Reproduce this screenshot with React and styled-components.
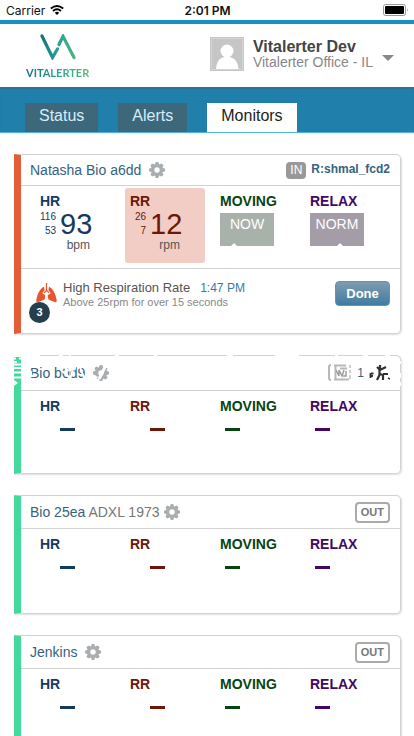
import styled, { createGlobalStyle } from "styled-components";

//#region Data
const tabs = ["Status", "Alerts", "Monitors"];

const monitors = [
	{
		name: "Natasha Bio a6dd",
		presence: "IN",
		room: "R:shmal_fcd2",
		headerHeight: 32,
		gearGap: 8,
		hr: { value: 93, high: 116, low: 53 },
		rr: { value: 12, high: 26, low: 7 },
		moving: "NOW",
		relax: "NORM",
		alert: {
			title: "High Respiration Rate",
			time: "1:47 PM",
			details: "Above 25rpm for over 15 seconds",
			count: 3,
		},
	},
	{ name: "Bio b0d9", worn: true, headerHeight: 36, gearGap: 8 },
	{ name: "Bio 25ea", device: "ADXL 1973", presence: "OUT", headerHeight: 34, gearGap: 4 },
	{ name: "Jenkins", presence: "OUT", headerHeight: 34, gearGap: 8 },
];

const colors = {
	hr: "#163a5f",
	rr: "#6d1709",
	moving: "#08440f",
	relax: "#430663",
};
//#endregion

//#region Icons
const WifiIcon = () => (
	<svg width="14" height="10" viewBox="0 0 14 10" fill="none" stroke="#000" strokeWidth="1.9">
		<path d="M0.8 3.6Q7 -1.6 13.2 3.6M3 6Q7 2.6 11 6" />
		<path d="M7 10 4.8 7.7Q7 6 9.2 7.7Z" fill="#000" stroke="none" />
	</svg>
);

const BatteryIcon = () => (
	<svg width="26" height="12" viewBox="0 0 26 12">
		<rect x="0.5" y="0.5" width="22" height="11" rx="2" fill="#fff" stroke="#999" />
		<rect x="2" y="2" width="19" height="8" rx="1" fill="#000" />
		<path d="M24 4Q25.5 6 24 8Z" fill="#999" />
	</svg>
);

const LogoMark = () => (
	<svg width="36" height="26" viewBox="0 0 36 26" fill="none" strokeWidth="3.2" strokeLinecap="round">
		<defs>
			<linearGradient id="mark" x1="0" x2="36" y1="0" y2="0" gradientUnits="userSpaceOnUse">
				<stop offset="0" stopColor="#126d80" />
				<stop offset="0.5" stopColor="#2aa295" />
				<stop offset="1" stopColor="#53b578" />
			</linearGradient>
		</defs>
		<path d="M2 2 12.5 23.5 17.5 15" stroke="url(#mark)" />
		<path d="M19 10.5 23 2.3 34 23.5" stroke="url(#mark)" />
	</svg>
);

const GearIcon = () => (
	<svg width="16" height="16" viewBox="-8 -8 16 16" fill="#aaaeb1">
		{[0, 45, 90, 135].map((angle) => (
			<path key={angle} d="M-2 -6 -1.3 -8H1.3L2 -6V6L1.3 8H-1.3L-2 6Z" transform={`rotate(${angle})`} />
		))}
		<circle r="6" />
		<circle r="2.7" fill="#fff" />
	</svg>
);

const LungsIcon = () => (
	<svg width="21" height="20" viewBox="0 0 21 20" fill="#e9532d">
		<path d="M9.9 0H11.1V7L13.5 9.5 12.7 10.3 10.5 8.3 8.3 10.3 7.5 9.5 9.9 7Z" />
		<path d="M8 3.7C4.5 4.7 1 11.5.3 17.5.1 19.6 1.8 19.5 3.7 18.5L8 16.8Q9.3 16 9.2 11.5L8 11.8 6.3 10 8.6 7.2Z" />
		<path d="M13 3.7C16.5 4.7 20 11.5 20.7 17.5 20.9 19.6 19.2 19.5 17.3 18.5L13 16.8Q11.7 16 11.8 11.5L13 11.8 14.7 10 12.4 7.2Z" />
	</svg>
);

const AvatarIcon = () => (
	<svg width="34" height="34" viewBox="0 0 34 34">
		<rect width="34" height="34" fill="#c6c6c6" />
		<path d="M1.5 1.5H32.5V32.5H1.5Z" fill="none" stroke="#d5d5d5" />
		<circle cx="17" cy="14" r="6.5" fill="#fff" />
		<path d="M6 32C6.5 25 9 21.5 14 20H20C25 21.5 28 25 28.5 32Z" fill="#fff" />
	</svg>
);

// Broken up badge and figure at the end of a worn header
const WornBadge = () => (
	<svg width="24" height="18" viewBox="0 0 24 18" fill="none" stroke="#b8b8b8">
		<path d="M3 1Q1 1 1 3V14Q1 16 3 16" strokeWidth="2" />
		<path d="M6 1.5H18M7.5 1V15M6 15.5H21M12 4.5H19" strokeWidth="2" />
		<path d="M8 6 11 12V6L14 12 16 6M15 12H18V7" stroke="#999" strokeWidth="1.4" />
		<path d="M22 1V4M22 6V9M22 11V15" strokeWidth="1.4" />
	</svg>
);

const WornFigure = () => (
	<svg width="21" height="18" viewBox="0 0 21 18" fill="none" stroke="#303030">
		<path d="M1.5 9V14M2 9.5H4.5M2 12H4" strokeWidth="1.8" />
		<path d="M8 3 11 6 17 3M11 1V5M10.5 6V11L8 16M11 10 14 11V16M14 10 19 10" strokeWidth="2.2" />
		<path d="M19 14 21 15" strokeWidth="1.5" />
	</svg>
);

const Scratches = () => (
	<ScratchLayer viewBox="0 0 387 34" fill="none" stroke="#fff" aria-hidden="true">
		<path d="M0 1H26M0 3.5H2M5 3.5H7M0 7H3M0 9.5H7M0 13H7M0 17.5H7M0 22.5H7" strokeWidth="2" />
		<path d="M0 25 4 28 0 31Z" fill="#fff" stroke="none" />
		<path d="M45 0H49M55 0H57M101 0H105M140 0H143M213 0H219M261 0H285M321 0H324M349 0H354M371 0H376" strokeWidth="4" />
		<path d="M17 9V13M17 16V20M16 21H20M47 15 55 22M50 12 55 16M60 9 57 22M63 8 60 15M66 12 70 23" strokeWidth="2" />
		<path d="M85 24 94 6" strokeWidth="3" />
		<path d="M78 22 83 24M94 7V13" strokeWidth="5" />
		<path d="M386 6V9M386 18V23M386 27V31" strokeWidth="3" />
	</ScratchLayer>
);
//#endregion

const Vital = ({ label, unit, color, reading, alerting }) => (
	<Metric $color={color} $alerting={alerting}>
		<MetricLabel>{label}</MetricLabel>
		{reading ? (
			<>
				<Reading>
					<Limits>
						<span>{reading.high}</span>
						<span>{reading.low}</span>
					</Limits>
					<Value>{reading.value}</Value>
				</Reading>
				<Unit>{unit}</Unit>
			</>
		) : (
			<Dash $indent={20} />
		)}
	</Metric>
);

const State = ({ label, color, fill, notch, state }) => (
	<Metric $color={color}>
		<MetricLabel>{label}</MetricLabel>
		{state ? (
			<StateBox $fill={fill} $notch={notch}>
				{state}
			</StateBox>
		) : (
			<Dash $indent={5} />
		)}
	</Metric>
);

const Monitor = ({ monitor }) => (
	<Card $alerting={!!monitor.alert}>
		<CardHeader $height={monitor.headerHeight}>
			<Name>
				{monitor.name} {monitor.device && <Device>{monitor.device}</Device>}
			</Name>
			<GearButton type="button" aria-label="Settings" $gap={monitor.gearGap}>
				<GearIcon />
			</GearButton>
			<Location>
				{monitor.presence === "IN" && <InBadge>IN</InBadge>}
				{monitor.room && <Room>{monitor.room}</Room>}
				{monitor.presence === "OUT" && <OutBadge>OUT</OutBadge>}
				{monitor.worn && (
					<>
						<WornBadge />
						<span>1</span>
						<WornFigure />
					</>
				)}
			</Location>
		</CardHeader>
		<Metrics>
			<Vital label="HR" unit="bpm" color={colors.hr} reading={monitor.hr} />
			<Vital label="RR" unit="rpm" color={colors.rr} reading={monitor.rr} alerting={!!monitor.alert} />
			<State label="MOVING" color={colors.moving} fill="#a9b1ab" notch={11} state={monitor.moving} />
			<State label="RELAX" color={colors.relax} fill="#a49da8" notch={27} state={monitor.relax} />
		</Metrics>
		{monitor.alert && (
			<Alert>
				<AlertIcon>
					<LungsIcon />
					<Count>{monitor.alert.count}</Count>
				</AlertIcon>
				<AlertText>
					<AlertTitle>
						{monitor.alert.title}
						<Time>{monitor.alert.time}</Time>
					</AlertTitle>
					<Details>{monitor.alert.details}</Details>
				</AlertText>
				<DoneButton type="button">Done</DoneButton>
			</Alert>
		)}
		{monitor.worn && <Scratches />}
	</Card>
);

const App = () => {
	return (
		<>
			<GlobalStyle />
			<StatusBar>
				<Carrier>
					Carrier <WifiIcon />
				</Carrier>
				<Clock>2:01 PM</Clock>
				<Battery>
					<BatteryIcon />
				</Battery>
			</StatusBar>
			<Header>
				<Logo>
					<LogoMark />
					<LogoText>VITALERTER</LogoText>
				</Logo>
				<UserMenu type="button">
					<AvatarIcon />
					<span>
						<UserName>Vitalerter Dev</UserName>
						<Office>Vitalerter Office - IL</Office>
					</span>
					<Caret />
				</UserMenu>
			</Header>
			<Nav>
				{tabs.map((tab) => (
					<Tab key={tab} href="#" $active={tab === "Monitors"}>
						{tab}
					</Tab>
				))}
			</Nav>
			<List>
				{monitors.map((monitor) => (
					<Monitor key={monitor.name} monitor={monitor} />
				))}
			</List>
		</>
	);
};

export default App;

//#region Declarations
const GlobalStyle = createGlobalStyle`
	* {
		box-sizing: border-box;
	}
	body {
		margin: 0;
		background: #fff;
		font-family: "Liberation Sans", Arial, sans-serif;
	}
	svg {
		display: block;
		flex: none;
	}
	button {
		font-family: inherit;
	}
`;

const StatusBar = styled.div`
	display: grid;
	grid-template-columns: 1fr auto 1fr;
	align-items: center;
	height: 20px;
	padding: 0 5px 0 6px;
	font: 12px Inter, sans-serif;
	color: #111;
`;

const Carrier = styled.span`
	display: flex;
	align-items: center;
	gap: 5px;
`;

const Clock = styled.span`
	font-weight: 600;
`;

const Battery = styled.span`
	justify-self: end;
`;

const Header = styled.header`
	display: flex;
	justify-content: space-between;
	align-items: flex-start;
	height: 67px;
	padding: 10px 20px 0 26px;
	border-top: 4px solid #188fc0;
`;

const Logo = styled.div`
	display: flex;
	flex-direction: column;
	align-items: center;
	gap: 6px;
`;

const LogoText = styled.span`
	font: 700 11px/14px Lato, sans-serif;
	color: transparent;
	background: linear-gradient(90deg, #14707f, #2a9d92 45%, #59b878);
	background-clip: text;
`;

const UserMenu = styled.button`
	display: flex;
	align-items: center;
	gap: 9px;
	padding: 3px 0 0;
	border: none;
	background: none;
	text-align: left;
`;

const UserName = styled.strong`
	display: block;
	font-size: 16px;
	line-height: 16px;
	color: #444;
`;

const Office = styled.span`
	display: block;
	font-size: 14px;
	line-height: 14px;
	color: #888;
`;

const Caret = styled.span`
	border: 6px solid transparent;
	border-top-color: #888;
	border-bottom: none;
	margin-top: 8px;
`;

const Nav = styled.nav`
	display: flex;
	align-items: flex-end;
	gap: 20px;
	height: 46px;
	padding-left: 25px;
	background: #217fab;
	border-bottom: 1px solid #4eb2dc;
	box-shadow: inset 0 2px 1px #2f7291;
`;

const Tab = styled.a`
	padding: 0 14px;
	font-size: 16px;
	line-height: 26px;
	height: 29px;
	text-decoration: none;
	color: ${(p) => (p.$active ? "#222" : "#d5edf8")};
	background: ${(p) => (p.$active ? "#fff" : "#3d687c")};
`;

const List = styled.main`
	display: flex;
	flex-direction: column;
	gap: 21px;
	padding: 21px 13px 21px 14px;
`;

const Card = styled.section`
	position: relative;
	min-height: 119px;
	border: 1px solid #d2d2d2;
	border-left: 7px solid ${(p) => (p.$alerting ? "#e35d39" : "#43d99d")};
	border-radius: 0 5px 5px 0;
	box-shadow: 1px 1px 2px #ddd;
`;

const CardHeader = styled.div`
	display: flex;
	align-items: center;
	height: ${(p) => p.$height - 1}px;
	padding: 0 10px 0 9px;
	border-bottom: 1px solid #d2d2d2;
`;

const Name = styled.span`
	font-size: 14px;
	color: #36627e;
`;

const Device = styled.span`
	color: #777;
`;

const GearButton = styled.button`
	margin-left: ${(p) => p.$gap}px;
	padding: 0;
	border: none;
	background: none;
`;

const Location = styled.div`
	display: flex;
	align-items: center;
	gap: 5px;
	margin-left: auto;
	font-size: 12px;
	color: #36627e;
`;

const InBadge = styled.span`
	padding: 0 4px;
	border-radius: 4px;
	background: #999;
	color: #fff;
	line-height: 17px;
`;

const OutBadge = styled.span`
	padding: 0 4px;
	border: 2px solid #aaa;
	border-radius: 4px;
	font-size: 11px;
	font-weight: bold;
	line-height: 17px;
	color: #777;
`;

const Room = styled.strong`
	padding-bottom: 3px;
	font-size: 12px;
`;

const Metrics = styled.div`
	display: grid;
	grid-template-columns: repeat(4, 1fr);
	gap: 10px;
	padding: 2px 15px 5px 14px;
`;

const Metric = styled.div`
	min-height: 75px;
	padding: 5px 0 0 5px;
	border-radius: 3px;
	color: ${(p) => p.$color};
	background: ${(p) => (p.$alerting ? "#f1cdc6" : "none")};
`;

const MetricLabel = styled.div`
	font-size: 14px;
	font-weight: bold;
	line-height: 16px;
`;

const Reading = styled.div`
	display: flex;
	align-items: center;
	gap: 4px;
	height: 29px;
`;

const Limits = styled.div`
	display: flex;
	flex-direction: column;
	align-items: flex-end;
	width: 16px;
	font-size: 10px;
	line-height: 14px;
`;

const Value = styled.span`
	font-size: 29px;
	line-height: 28px;
`;

const Unit = styled.div`
	width: 50px;
	font-size: 12px;
	line-height: 14px;
	text-align: right;
	color: #555;
`;

const Dash = styled.div`
	width: 15px;
	height: 3px;
	margin: 14px 0 0 ${(p) => p.$indent}px;
	background: currentColor;
`;

const StateBox = styled.div`
	position: relative;
	width: 54px;
	height: 33px;
	margin-top: 4px;
	font-size: 14px;
	line-height: 22px;
	text-align: center;
	color: #fff;
	background: ${(p) => p.$fill};

	&::after {
		content: "";
		position: absolute;
		bottom: 0;
		left: ${(p) => p.$notch}px;
		border: 3px solid transparent;
		border-top: none;
		border-bottom-color: #fff;
	}
`;

const Alert = styled.div`
	display: flex;
	align-items: flex-start;
	height: 65px;
	padding: 12px 10px 0 15px;
	border-top: 1px solid #d2d2d2;
`;

const AlertIcon = styled.div`
	position: relative;
	padding-top: 2px;
`;

const Count = styled.span`
	position: absolute;
	top: 21px;
	left: -7px;
	width: 21px;
	border-radius: 50%;
	font-size: 11px;
	font-weight: bold;
	line-height: 21px;
	text-align: center;
	color: #fff;
	background: #263f4c;
`;

const AlertText = styled.div`
	flex: 1;
	padding-left: 6px;
`;

const AlertTitle = styled.div`
	font-size: 13px;
	line-height: 14px;
	color: #555;
`;

const Time = styled.time`
	margin-left: 10px;
	font-size: 12px;
	color: #357aa5;
`;

const Details = styled.div`
	font-size: 11px;
	line-height: 14px;
	color: #888;
`;

const DoneButton = styled.button`
	width: 55px;
	height: 25px;
	padding: 0;
	border: 1px solid #6794ad;
	border-radius: 4px;
	font-size: 13px;
	font-weight: bold;
	color: #fff;
	background: linear-gradient(#7f9cae, #3f7ca4);
`;

const ScratchLayer = styled.svg`
	position: absolute;
	top: -1px;
	left: -7px;
	width: calc(100% + 8px);
	pointer-events: none;
`;
//#endregion
